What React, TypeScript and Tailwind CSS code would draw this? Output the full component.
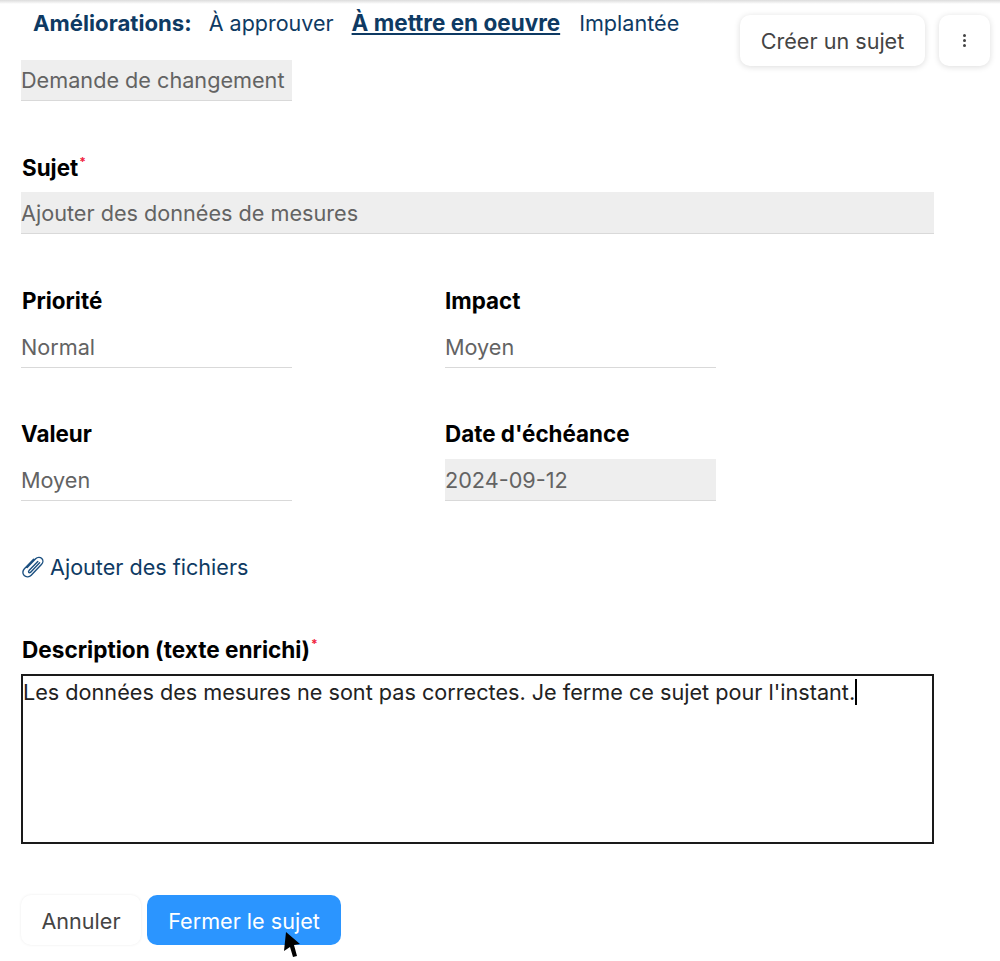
function Label({ text, required, inset, wide }: { text: string; required?: boolean; inset?: boolean; wide?: boolean }) {
  return (
    <div className={`h-[26px] flex items-start leading-[26px] font-bold text-black ${wide ? 'text-[22.6px]' : 'text-[22.4px]'} ${inset ? 'pl-px' : ''}`}>
      {text}
      {required && <span className="text-[12px] leading-[14px] text-[#f0203c] ml-px">*</span>}
    </div>
  );
}

function Field({ value, filled, width }: { value: string; filled?: boolean; width: string }) {
  return (
    <div className={`h-[42px] ${width} ${filled ? 'bg-[#eeeeee]' : ''} border-b border-[#d9d9d9] pt-[2px] flex items-center text-[21.65px] text-[#636363]`}>
      {value}
    </div>
  );
}

function PaperclipIcon() {
  return (
    <svg width="24" height="24" viewBox="0 0 24 24" fill="none" stroke="#1c5080" strokeWidth="1.4" strokeLinecap="round" strokeLinejoin="round">
      <path d="M6.2 12.6 L14.6 3.8 C16.4 2 19.2 1.9 20.8 3.5 C22.4 5.1 22.2 7.7 20.4 9.5 L10.2 20.2 C8.4 22.1 5.2 22.5 3.2 20.6 C1.2 18.7 1.6 15.6 3.4 13.7 L12.6 4.2" />
      <path d="M16.8 6.4 L8 15.6 C7 16.7 7.8 18.3 9.4 17.4 L18.6 7.8" />
    </svg>
  );
}

export default function App() {
  return (
    <div className="relative w-[1000px] h-[961px] bg-white overflow-hidden font-['Inter',sans-serif] pl-[21px]">
      {/* Top shadow */}
      <div className="absolute top-0 left-0 right-0 h-[4px] bg-gradient-to-b from-[#dcdcdc] to-white" />

      {/* Nav */}
      <div className="flex items-start justify-between pr-[10px] h-[67px]">
        <div className="flex items-center pl-[12px] pt-[9px] leading-[28px] text-[#0e3a63]">
          <span className="font-bold text-[22.2px] mr-[17px]">Améliorations:</span>
          <span className="text-[21.5px] mr-[18px]">À approuver</span>
          <span className="font-bold underline text-[22.5px] mr-[19px]">À mettre en oeuvre</span>
          <span className="text-[21.6px]">Implantée</span>
        </div>
        <div className="flex gap-[14px] pt-[15px]">
          <button className="h-[51px] w-[185px] pt-[2px] bg-white rounded-[10px] shadow-[0_1px_6px_rgba(0,0,0,0.14)] text-[21.6px] text-[#444444]">
            Créer un sujet
          </button>
          <button className="h-[51px] w-[51px] bg-white rounded-[10px] shadow-[0_1px_6px_rgba(0,0,0,0.14)] flex flex-col items-center justify-center gap-[2px]">
            <span className="w-[3px] h-[3px] rounded-full bg-[#444444]" />
            <span className="w-[3px] h-[3px] rounded-full bg-[#444444]" />
            <span className="w-[3px] h-[3px] rounded-full bg-[#444444]" />
          </button>
        </div>
      </div>

      <div className="mt-[-7px] h-[41px] w-[271px] bg-[#eeeeee] border-b border-[#d9d9d9] flex items-center text-[21.65px] text-[#636363]">
        Demande de changement
      </div>

      <div className="mt-[54px]">
        <Label text="Sujet" required inset />
        <div className="mt-[11px]">
          <Field value="Ajouter des données de mesures" filled width="w-[913px]" />
        </div>
      </div>

      <div className="mt-[54px] grid grid-cols-[424px_271px]">
        <div>
          <Label text="Priorité" inset />
          <div className="mt-[12px]"><Field value="Normal" width="w-[271px]" /></div>
        </div>
        <div>
          <Label text="Impact" />
          <div className="mt-[12px]"><Field value="Moyen" width="w-[271px]" /></div>
        </div>
      </div>

      <div className="mt-[53px] grid grid-cols-[424px_271px]">
        <div>
          <Label text="Valeur" />
          <div className="mt-[12px]"><Field value="Moyen" width="w-[271px]" /></div>
        </div>
        <div>
          <Label text="Date d'échéance" />
          <div className="mt-[12px]"><Field value="2024-09-12" filled width="w-[271px]" /></div>
        </div>
      </div>

      <div className="mt-[52px] flex items-center gap-[5px] h-[28px] text-[21.6px] text-[#0e3a63]">
        <PaperclipIcon />
        Ajouter des fichiers
      </div>

      <div className="mt-[56px]">
        <Label text="Description (texte enrichi)" required inset wide />
        <div className="mt-[11px] w-[913px] h-[170px] border-2 border-[#1a1a1a] text-[21.65px] leading-[33px] text-[#222222]">
          <span className="border-r-2 border-black">Les données des mesures ne sont pas correctes. Je ferme ce sujet pour l'instant.</span>
        </div>
      </div>

      <div className="mt-[51px] flex gap-[6px]">
        <button className="h-[50px] w-[120px] pt-[2px] bg-white rounded-[10px] shadow-[0_0_3px_rgba(0,0,0,0.08)] text-[21.6px] text-[#444444]">
          Annuler
        </button>
        <button className="relative h-[50px] w-[194px] pt-[2px] bg-[#2b95ff] rounded-[10px] text-[21.6px] text-white">
          Fermer le sujet
          <svg className="absolute left-[137px] top-[37px]" width="18" height="26" viewBox="0 0 18 26">
            <path d="M2 0 L16 12 L10 13 L13 24 L9 25 L6 15 L0 19 Z" fill="#000000" />
          </svg>
        </button>
      </div>
    </div>
  );
}
